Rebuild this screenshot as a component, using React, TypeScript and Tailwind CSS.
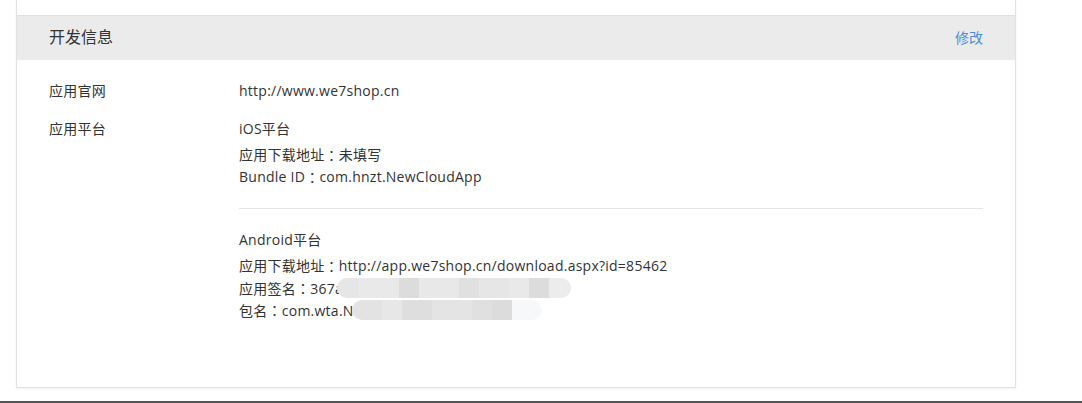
import React from "react";

const font = { fontFamily: '"Open Sans", "Noto Sans CJK SC", sans-serif' };

function C() {
  return <span style={{ fontFamily: '"Noto Sans CJK TC", sans-serif' }}>：</span>;
}

function Line({ children, className = "" }: { children: React.ReactNode; className?: string }) {
  return <div className={"h-[22px] flex items-center whitespace-nowrap " + className}>{children}</div>;
}

function Blur({ segs, w, h }: { segs: [number, string][]; w: number; h: number }) {
  return (
    <span
      className="inline-flex overflow-hidden rounded-full align-middle relative"
      style={{ width: w, height: h }}
    >
      {segs.map(([sw, c], i) => (
        <span key={i} style={{ width: sw, background: c }} className="h-full shrink-0" />
      ))}
    </span>
  );
}

export default function App() {
  return (
    <div className="w-[1082px] h-[403px] bg-white overflow-hidden flex flex-col" style={font}>
      <div className="ml-[16px] w-[1000px] border-x border-b border-[#e3e3e3] shadow-[0_1px_2px_rgba(0,0,0,0.06)]">
        <div className="h-[15px]" />
        <div className="h-[45px] bg-[#ebebeb] border-t border-[#e0e0e0] flex items-center justify-between px-[32px] pb-[2px]">
          <span className="text-[16px] text-[#333]">开发信息</span>
          <span className="text-[14px] text-[#4a8bdc]">修改</span>
        </div>
        <div className="pt-[20px] pb-[66px] px-[32px] text-[14px] leading-[22px] text-[#333] tracking-[0.25px]">
          <div className="flex">
            <Line className="w-[190px] shrink-0">应用官网</Line>
            <Line>http://www.we7shop.cn</Line>
          </div>
          <div className="flex mt-[16px]">
            <Line className="w-[190px] shrink-0">应用平台</Line>
            <div className="flex-1">
              <Line>iOS平台</Line>
              <Line className="mt-[4px]">应用下载地址<C />未填写</Line>
              <Line>Bundle ID<C />com.hnzt.NewCloudApp</Line>
              <div className="h-px bg-[#e5e5e5] mt-[20px] mb-[20px]" />
              <Line>Android平台</Line>
              <Line className="mt-[4px]">应用下载地址<C />http://app.we7shop.cn/download.aspx?id=85462</Line>
              <Line>
                <span>应用签名<C />367a</span>
                <span className="ml-[-6px] flex">
                  <Blur
                    w={234}
                    h={20}
                    segs={[
                      [22, "#e6e6e6"],
                      [40, "#e9e9e9"],
                      [20, "#dcdcdc"],
                      [40, "#e8e8e8"],
                      [20, "#e0e0e0"],
                      [30, "#e6e6e6"],
                      [20, "#e9e9e9"],
                      [20, "#dcdcdc"],
                      [22, "#ececec"],
                    ]}
                  />
                </span>
              </Line>
              <Line>
                <span>包名<C />com.wta.N</span>
                <span className="ml-[-2px] flex">
                  <Blur
                    w={190}
                    h={20}
                    segs={[
                      [30, "#e3e3e3"],
                      [20, "#e7e7e7"],
                      [30, "#dedede"],
                      [40, "#e4e4e4"],
                      [20, "#e0e0e0"],
                      [20, "#dcdcdc"],
                      [30, "#f7f8fa"],
                    ]}
                  />
                </span>
              </Line>
            </div>
          </div>
        </div>
      </div>
      <div className="mt-[13px] h-[2px] bg-[#555]" />
    </div>
  );
}
